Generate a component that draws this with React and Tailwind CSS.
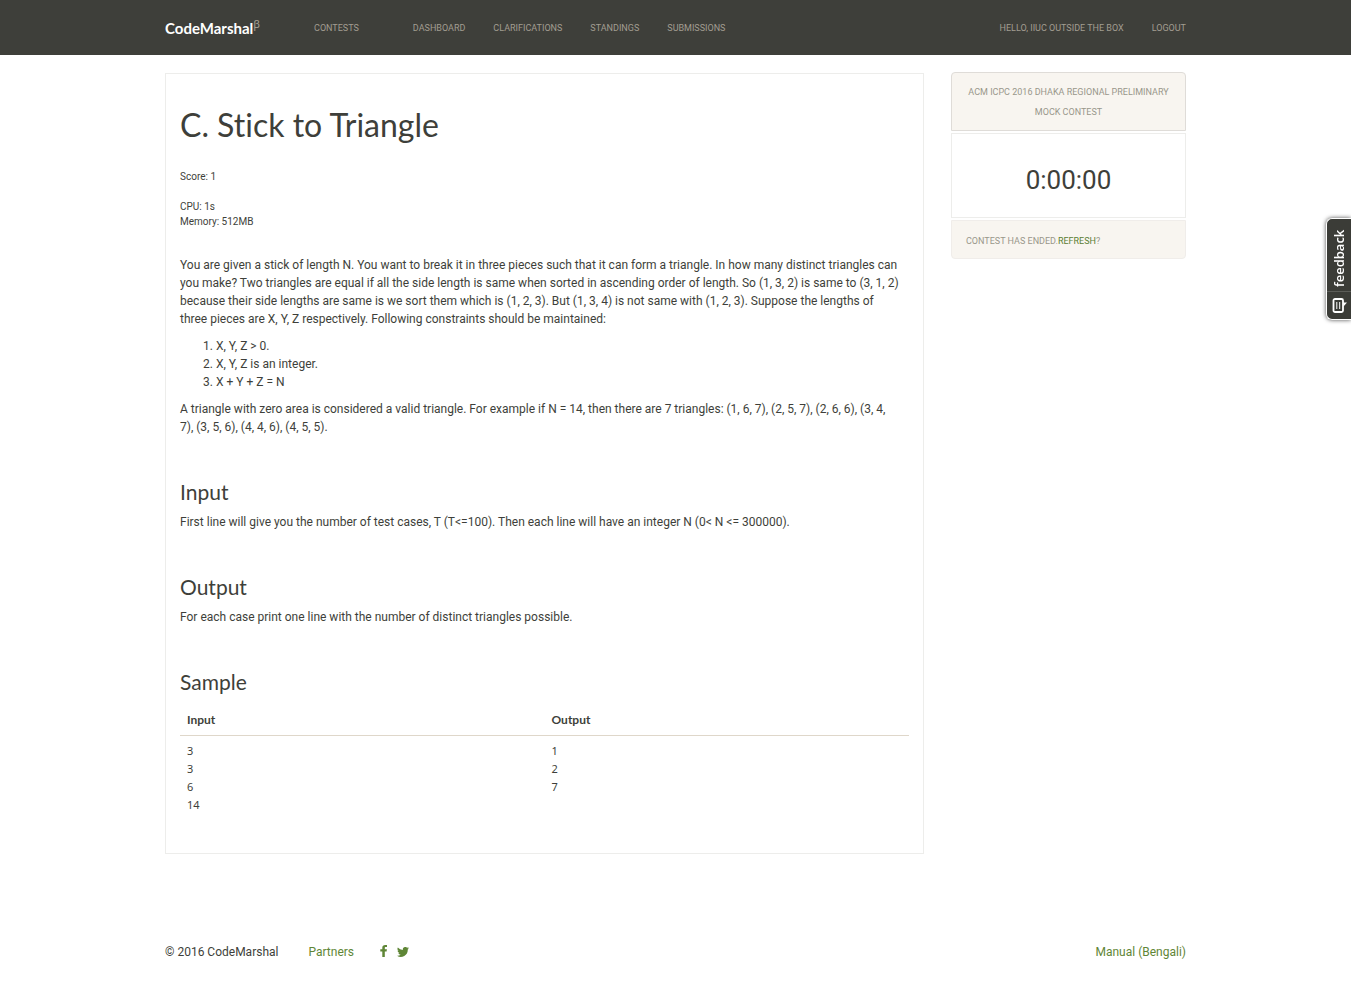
import React from "react";

const navLink = "text-[#a29d91] uppercase hover:text-white";

function Header() {
  return (
    <header className="bg-[#3e3f3a] px-4">
      <div className="mx-auto flex min-h-[55px] max-w-[1021px] flex-wrap items-center text-[9px] leading-5">
        <a href="#home" className="mr-[54px] font-[Lato,sans-serif] text-[15px] font-bold text-white">
          CodeMarshal<sup className="-top-1.5 font-['Noto_Sans',sans-serif] text-[11px] font-normal text-[#a29d91]">β</sup>
        </a>
        <nav className="flex flex-1 flex-wrap items-center gap-x-7">
          <a href="#contests" className={navLink + " mr-[26px]"}>Contests</a>
          <a href="#dashboard" className={navLink}>Dashboard</a>
          <a href="#clarifications" className={navLink}>Clarifications</a>
          <a href="#standings" className={navLink}>Standings</a>
          <a href="#submissions" className={navLink}>Submissions</a>
        </nav>
        <div className="flex items-center gap-7">
          <a href="#profile" className={navLink}>Hello, IIUC Outside The Box</a>
          <a href="#logout" className={navLink}>Logout</a>
        </div>
      </div>
    </header>
  );
}

function Section({ title, children }) {
  return (
    <section className="mt-11">
      <h2 className="mb-[9px] font-[Lato,sans-serif] text-[21px] leading-6">{title}</h2>
      {children}
    </section>
  );
}

function Problem() {
  return (
    <main className="mt-px min-w-0 flex-1 border border-[#ededeb] px-[14px] pt-[33px] pb-[39px]">
      <h1 className="font-[Lato,sans-serif] text-[32px] leading-9">C. Stick to Triangle</h1>
      <div className="mt-[26px] text-[10px] leading-[15px]">
        <p className="mb-[15px]">Score: 1</p>
        <p>CPU: 1s</p>
        <p>Memory: 512MB</p>
      </div>
      <div className="mt-[27px] flex flex-col gap-[9px]">
        <p>
          You are given a stick of length N. You want to break it in three pieces such that it can form a triangle. In how many distinct triangles can<br />
          you make? Two triangles are equal if all the side length is same when sorted in ascending order of length. So (1, 3, 2) is same to (3, 1, 2)<br />
          because their side lengths are same is we sort them which is (1, 2, 3). But (1, 3, 4) is not same with (1, 2, 3). Suppose the lengths of<br />
          three pieces are X, Y, Z respectively. Following constraints should be maintained:
        </p>
        <ol className="list-decimal pl-9">
          <li>X, Y, Z &gt; 0.</li>
          <li>X, Y, Z is an integer.</li>
          <li>X + Y + Z = N</li>
        </ol>
        <p>
          A triangle with zero area is considered a valid triangle. For example if N = 14, then there are 7 triangles: (1, 6, 7), (2, 5, 7), (2, 6, 6), (3, 4,<br />
          7), (3, 5, 6), (4, 4, 6), (4, 5, 5).
        </p>
      </div>
      <Section title="Input">
        <p>First line will give you the number of test cases, T (T&lt;=100). Then each line will have an integer N (0&lt; N &lt;= 300000).</p>
      </Section>
      <Section title="Output">
        <p>For each case print one line with the number of distinct triangles possible.</p>
      </Section>
      <Section title="Sample">
        <table className="w-full table-fixed text-left">
          <thead>
            <tr className="border-b border-[#dfd7ca] font-[Lato,sans-serif]">
              <th className="px-[7px] pt-2 pb-[6px] font-bold">Input</th>
              <th className="px-[7px] pt-2 pb-[6px] font-bold">Output</th>
            </tr>
          </thead>
          <tbody>
            <tr className="align-top font-['Noto_Sans',sans-serif] text-[11px]">
              <td className="px-[7px] pt-[6px] whitespace-pre-line">{"3\n3\n6\n14"}</td>
              <td className="px-[7px] pt-[6px] whitespace-pre-line">{"1\n2\n7"}</td>
            </tr>
          </tbody>
        </table>
      </Section>
    </main>
  );
}

function Sidebar() {
  return (
    <aside className="flex w-[235px] shrink-0 flex-col gap-0.5 text-[9px] leading-5 text-[#98978b] uppercase">
      <a href="#contest" className="rounded-t-sm border border-[#dfdcd8] bg-[#f8f5f0] px-2 pt-[9px] pb-2 text-center">
        ACM ICPC 2016 Dhaka Regional Preliminary<br />Mock Contest
      </a>
      <div className="border border-[#ededeb] pt-[30px] pb-[21px] text-center text-[26px] leading-8 text-[#3e3f3a]">0:00:00</div>
      <p className="rounded-b-sm border border-[#f0edea] bg-[#f8f5f0] px-[14px] pt-[10px] pb-[7px]">
        Contest has ended.<a href="#refresh" className="text-[#5b8033]">Refresh</a>?
      </p>
    </aside>
  );
}

function Footer() {
  return (
    <footer className="flex flex-wrap items-center pt-[89px] pb-5 text-[#5f8636]">
      <span className="mr-[30px] text-[#3e3f3a]">© 2016 CodeMarshal</span>
      <a href="#partners" className="mr-[26px]">Partners</a>
      <a href="#facebook" aria-label="Facebook" className="mr-[10px] pb-0.5">
        <svg viewBox="0 0 7 12" className="h-3 w-[7px]" fill="currentColor">
          <path d="M7 0v2.1H5.8c-.8 0-1 .3-1 .9v1.3h2.1l-.3 2.2H4.8V12H2.3V6.5H.3V4.3h2V2.8C2.3 1 3.4 0 5.2 0z" />
        </svg>
      </a>
      <a href="#twitter" aria-label="Twitter">
        <svg viewBox="0 0 24 20" className="h-[10px] w-3" fill="currentColor">
          <path d="M24 2.4a10 10 0 0 1-2.8.8A5 5 0 0 0 23.3.5a10 10 0 0 1-3.1 1.2 4.9 4.9 0 0 0-8.4 4.5A14 14 0 0 1 1.7 1.1a4.9 4.9 0 0 0 1.5 6.5 5 5 0 0 1-2.2-.6v.1a4.9 4.9 0 0 0 3.9 4.8 5 5 0 0 1-2.2.1 4.9 4.9 0 0 0 4.6 3.4A10 10 0 0 1 0 17.5 14 14 0 0 0 21.5 5.0 10 10 0 0 0 24 2.4z" />
        </svg>
      </a>
      <a href="#manual" className="ml-auto">Manual (Bengali)</a>
    </footer>
  );
}

function Feedback() {
  return (
    <button
      type="button"
      className="fixed top-[218px] right-0 flex h-[102px] w-[25px] flex-col items-center rounded-l-md border border-r-0 border-white bg-[#3b3c37] text-white shadow-[0_0_4px_rgba(0,0,0,0.7)]"
    >
      <span className="flex w-full flex-1 rotate-180 items-center justify-start pt-1 font-['Open_Sans',sans-serif] text-[13px] leading-6 font-semibold [writing-mode:vertical-rl]">feedback</span>
      <span className="flex h-7 w-full items-center justify-center border-t border-[#5c5d58]">
        <svg viewBox="0 0 15 15" className="h-[15px] w-[15px]" fill="none" stroke="white">
          <rect x="1.5" y="1" width="9.5" height="13" rx="1.5" strokeWidth="1.8" />
          <path d="M4.8 4v7M7.7 4v7" strokeWidth="1" />
          <path d="M11 4.5h4L11.5 8.5z" fill="white" stroke="none" />
        </svg>
      </span>
    </button>
  );
}

export default function App() {
  return (
    <div className="bg-white font-[Roboto,sans-serif] text-[12px] leading-[18px] text-[#3e3f3a] [font-variant-ligatures:none]">
      <Header />
      <div className="px-4">
        <div className="mx-auto max-w-[1021px] pt-[17px]">
          <div className="flex items-start gap-[27px]">
            <Problem />
            <Sidebar />
          </div>
          <Footer />
        </div>
      </div>
      <Feedback />
    </div>
  );
}
